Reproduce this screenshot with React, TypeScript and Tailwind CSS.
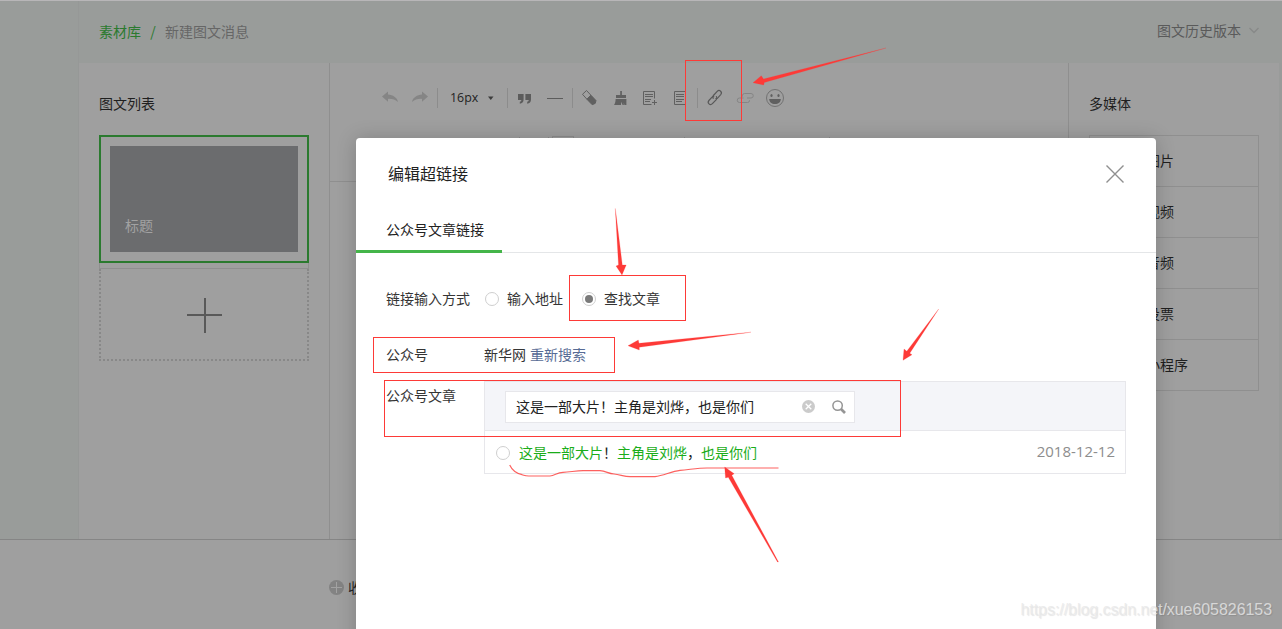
import type { ReactNode } from 'react';

const mediaItems = ['图片', '视频', '音频', '投票', '小程序'];

function Divider({ className }: { className: string }) {
  return <span className={`h-5 w-px shrink-0 bg-[#8c8c8c] ${className}`} />;
}

function Radio({ checked = false }: { checked?: boolean }) {
  return (
    <span className="flex size-[14px] shrink-0 items-center justify-center rounded-full border border-[#cfcfcf] bg-white">
      {checked && <span className="size-2 rounded-full bg-[#7a7a7a]" />}
    </span>
  );
}

function Header() {
  return (
    <header className="flex h-[62px] shrink-0 items-center justify-between bg-[#999c9a] px-5 pb-0.5 text-sm">
      <div className="flex items-center">
        <span className="text-[#2b7a2f]">素材库</span>
        <span className="w-6 text-center text-[#2b7a2f]">/</span>
        <span className="text-[#666]">新建图文消息</span>
      </div>
      <div className="-mt-0.5 flex items-center gap-2 pr-[3px] text-[#5a5a5a]">
        图文历史版本
        <svg width="10" height="7" viewBox="0 0 10 7" fill="none" stroke="#878988" strokeWidth="1.3">
          <path d="M0.5 1L5 5.5L9.5 1" />
        </svg>
      </div>
    </header>
  );
}

function ArticleList() {
  return (
    <aside className="w-[251px] shrink-0 border-r border-[#8f8f8f] px-5 pt-[29px]">
      <h3 className="text-sm leading-[22px] text-[#1f1f1f]">图文列表</h3>
      <div className="mt-[21px] h-32 w-[210px] border-2 border-[#2b7a2f] p-[9px]">
        <div className="flex h-[106px] items-end bg-[#6b6c6e] px-[15px] pb-4 text-sm leading-[22px] text-[#a2a2a2]">标题</div>
      </div>
      <div className="h-[6px] w-[210px] border border-t-0 border-[#8f8f8f]" />
      <div className="flex h-[92px] w-[210px] items-center justify-center border-2 border-t-0 border-dotted border-[#888] pt-[3px] pl-px">
        <svg width="35" height="35" viewBox="0 0 35 35" fill="#595959">
          <path d="M17 0h2v35h-2zM0 16h35v2H0z" />
        </svg>
      </div>
    </aside>
  );
}

function Toolbar() {
  return (
    <div className="flex h-5 items-center">
      <svg className="ml-[51px] shrink-0" width="18" height="20" viewBox="0 0 18 20" fill="#858585">
        <path d="M1 8.6L7 3.6V6.6C12 7 16 9.4 17 14C14 11.3 11 10.7 7 10.9V13.8Z" />
      </svg>
      <svg className="ml-3 shrink-0" width="18" height="20" viewBox="0 0 18 20" fill="#858585">
        <path d="M17 8.6L11 3.6V6.6C6 7 2 9.4 1 14C4 11.3 7 10.7 11 10.9V13.8Z" />
      </svg>
      <Divider className="ml-2" />
      <span className="ml-3 w-7 font-['Open_Sans',sans-serif] text-[12.4px] leading-5 text-[#222]">16px</span>
      <svg className="ml-[10px] shrink-0" width="6" height="4" viewBox="0 0 6 4" fill="#3c3c3c">
        <path d="M0 0.5H5.5L2.75 4Z" />
      </svg>
      <Divider className="ml-[13px]" />
      <svg className="ml-[9px] shrink-0" width="16" height="20" viewBox="0 0 16 20" fill="#5c5c5c">
        <path d="M1 6h5.6v5.6c0 2.400-1.500 3.900-3.800 4.200v-2c1-.3 1.500-.8 1.500-1.800H1zM8.400 6H14v5.600c0 2.400-1.500 3.900-3.800 4.200v-2c1-.3 1.500-.8 1.500-1.800H8.400z" />
      </svg>
      <svg className="ml-[13px] shrink-0" width="18" height="20" viewBox="0 0 18 20" fill="#5c5c5c">
        <path d="M1 10h16v1H1z" />
      </svg>
      <Divider className="ml-2" />
      <svg className="ml-2 shrink-0" width="18" height="20" viewBox="0 0 18 20" fill="none" stroke="#606060">
        <path d="M1.500 6.300L5.500 2.500L10 7.300L5.900 11.200Z" strokeLinejoin="round" />
        <path d="M5.900 11.200L10 7.300L15 12.600L14.200 15.400L11.200 16.700Z" fill="#606060" strokeLinejoin="round" />
      </svg>
      <svg className="ml-[14px] shrink-0" width="16" height="20" viewBox="0 0 16 20" fill="#606060">
        <path d="M7.200 3h1.700v4H13v3H3V7h4.200zM2.600 11h10.800v6h-2l-.6-2.500V17H9.600L8 13.800V17H1c1.200-1.700 1.600-3.600 1.600-6z" />
      </svg>
      <svg className="ml-[13px] shrink-0" width="16" height="20" viewBox="0 0 16 20" fill="none" stroke="#606060">
        <path d="M12.500 10.500V3.500H1.500V16.500H9.500M3 6.500h8M3 8.500h8M3 11.500h6M3 13.500h5M12.500 12v5M10 14.500h5" />
      </svg>
      <svg className="ml-[15px] shrink-0" width="13" height="20" viewBox="0 0 13 20" fill="none" stroke="#606060">
        <path d="M12 3.500H1.500V16.500H12M3 6.500h8M3 8.500h8M3 11.500h8M3 13.500h6" />
      </svg>
      <Divider className="ml-[11px]" />
      <svg className="ml-2 shrink-0" width="18" height="20" viewBox="0 0 18 20" fill="none" stroke="#585858" strokeWidth="1.200" strokeLinecap="round">
        <path d="M7.200 10.300c-.7-.9-.6-1.900.2-2.800l3.800-4.100c1-1 2.400-1.100 3.400-.2s1 2.300.1 3.400l-2.900 3.200c-.6.600-1.200.8-1.900.7" />
        <path d="M10.400 8.700c.8.900.7 1.900-.1 2.900l-3.900 4.100c-1 1-2.400 1.100-3.400.2s-1-2.300-.1-3.400l2.900-3.200c.6-.6 1.200-.8 1.900-.7" />
      </svg>
      <svg className="ml-3 shrink-0" width="19" height="20" viewBox="0 0 19 20" fill="none" stroke="#858585">
        <path d="M6.500 8.500V7.500a2 2 0 0 1 2-2H15a2.250 2.250 0 0 1 0 4.500h-4M13.500 12v.5a2 2 0 0 1-2 2H3.500a2.250 2.250 0 0 1 0-4.500h4" />
      </svg>
      <svg className="ml-[10px] shrink-0" width="20" height="20" viewBox="0 0 20 20" fill="#606060">
        <circle cx="10" cy="10" r="8.500" fill="none" stroke="#727272" />
        <ellipse cx="6.500" cy="7.500" rx="1.100" ry="1.500" />
        <ellipse cx="13.500" cy="7.500" rx="1.100" ry="1.500" />
        <path d="M4.200 11h11.600c0 3.100-2.400 5-5.800 5s-5.800-1.900-5.800-5z" />
      </svg>
    </div>
  );
}

function Editor() {
  return (
    <main className="min-w-0 flex-1">
      <div className="h-[119px] border-b border-[#8f8f8f] pt-[25px]">
        <Toolbar />
        <div className="mt-7 flex h-5 items-start">
          <span className="mt-px ml-[189px] h-5 w-px bg-[#8c8c8c]" />
          <span className="mt-px ml-[28px] h-5 w-px bg-[#8c8c8c]" />
          <span className="ml-[3px] h-5 w-[22px] border border-[#8c8c8c]" />
          <span className="mt-px ml-[110px] h-5 w-px bg-[#8c8c8c]" />
          <span className="mt-px ml-[144px] h-5 w-px bg-[#8c8c8c]" />
        </div>
      </div>
    </main>
  );
}

function MediaPanel() {
  return (
    <aside className="w-[211px] shrink-0 border-l border-[#8f8f8f] pt-[29px] pl-5">
      <h3 className="text-sm leading-[22px] text-[#1f1f1f]">多媒体</h3>
      <ul className="mt-[21px] w-[170px] border border-b-0 border-[#8f8f8f]">
        {mediaItems.map((item) => (
          <li key={item} className="flex h-[51px] items-center border-b border-[#8f8f8f] pb-0.5 pl-14 text-sm text-[#1f1f1f]">
            {item}
          </li>
        ))}
      </ul>
    </aside>
  );
}

function FormRow({ label, className, children }: { label: string; className: string; children: ReactNode }) {
  return (
    <div className={`flex ${className}`}>
      <span className="w-[98px] shrink-0 pb-0.5 leading-[22px]">{label}</span>
      {children}
    </div>
  );
}

function LinkDialog() {
  return (
    <div className="absolute top-[138px] left-[356px] h-[520px] w-[800px] rounded-[4px] bg-white text-sm text-[#353535] shadow-[0_1px_20px_rgba(0,0,0,0.2)]">
      <div className="flex h-[72px] items-center justify-between px-8">
        <h2 className="pb-0.5 text-base text-[#222]">编辑超链接</h2>
        <svg width="18" height="18" viewBox="0 0 18 18" stroke="#8f8f8f" strokeWidth="1.400">
          <path d="M0.500 0.500L17.500 17.500M17.500 0.500L0.500 17.500" />
        </svg>
      </div>
      <div className="flex h-[43px] border-b border-[#e4e6e8]">
        <div className="h-[43px] w-[146px] border-b-[3px] border-[#44b549] pt-2 pl-[30px] leading-[22px] text-[#222]">公众号文章链接</div>
      </div>
      <div className="px-[30px] pt-[35px]">
        <FormRow label="链接输入方式" className="h-[22px] items-center">
          <div className="ml-px flex items-center gap-2">
            <Radio />
            <span className="pb-0.5">输入地址</span>
          </div>
          <div className="ml-[19px] flex items-center gap-2">
            <Radio checked />
            <span className="pb-0.5">查找文章</span>
          </div>
        </FormRow>
        <FormRow label="公众号" className="mt-[34px] h-[22px] items-center">
          <span className="pb-0.5">新华网</span>
          <a className="ml-1 pb-0.5 text-[#576b95]">重新搜索</a>
        </FormRow>
        <div className="mt-[15px] flex items-start">
          <span className="w-[98px] shrink-0 pt-[3px] leading-[22px]">公众号文章</span>
          <div className="h-[93px] w-[642px] border border-[#e7e7eb]">
            <div className="h-[49px] border-b border-[#e7e7eb] bg-[#f4f5f9] pt-[9px] pl-5">
              <div className="flex h-8 w-[350px] items-center border border-[#e7e7eb] bg-white pb-px pl-[10px] text-[#222]">
                <span className="w-[286px] pb-px">这是一部大片！主角是刘烨，也是你们</span>
                <svg width="13" height="13" viewBox="0 0 13 13" fill="#cbcbcb">
                  <circle cx="6.500" cy="6.500" r="6.500" />
                  <path d="M3.700 3.700L9.300 9.300M9.300 3.700L3.700 9.300" stroke="#fff" strokeWidth="1.300" />
                </svg>
                <svg className="mt-px ml-[17px]" width="14" height="14" viewBox="0 0 14 14" fill="none" stroke="#959595">
                  <circle cx="5.600" cy="5.600" r="4.700" strokeWidth="1.500" />
                  <path d="M9 9L13 13" strokeWidth="2.600" />
                </svg>
              </div>
            </div>
            <div className="flex h-[42px] items-center pt-0.5 pr-[10px] pl-[11px]">
              <Radio />
              <span className="ml-[9px] pb-[3px] text-[#1aad19]">
                这是一部大片<span className="text-[#222]">！</span>主角是刘烨<span className="text-[#222]">，</span>也是你们
              </span>
              <span className="ml-auto pb-0.5 font-['Open_Sans',sans-serif] text-[15px] text-[#8d8d8d]">2018-12-12</span>
            </div>
          </div>
        </div>
      </div>
    </div>
  );
}

// Red boxes and arrows drawn over the page
function Annotations() {
  return (
    <svg className="pointer-events-none absolute inset-0" width="1282" height="629" viewBox="0 0 1282 629">
      <g fill="none" stroke="#fd3a37">
        <rect x="685.5" y="60.5" width="56" height="60" />
        <rect x="569.5" y="275.5" width="116" height="45" />
        <rect x="373.5" y="337.5" width="241" height="35" />
        <rect x="384.5" y="380.5" width="516" height="56" />
      </g>
      <path
        d="M509.700 465C512 470 517 473.500 522 474.700C525 476 528 476 532 476H550C555 475.500 557 472.500 563 472.300C570 472 576 470.800 583 470.700H600C606 471 608 473.500 614 474C620 474.500 624 476.700 630 476.700H655C664 475.500 671 471.500 680 470.300C690 469.500 698 468 707 468H778.500"
        fill="none"
        stroke="#fd3a37"
        strokeWidth="1.200"
        opacity="0.8"
      />
      <g fill="#fd3a37" stroke="#fd3a37" strokeWidth="0.200">
        <path d="M753 82.700L761.300 75.700L763.500 79L886 48L764.300 82.500L763.700 85Z" />
        <path d="M615.300 208.500L622.300 264.900L626.200 265L622 274.900L616 266L618.500 265Z" />
        <path d="M628 345.700L638.300 340L639 343.300L751 332.200L639.300 347.200L639.300 350Z" />
        <path d="M903 360.300L904 349L906.800 351.200L938.700 309L909.800 353.200L912 354.700Z" />
        <path d="M724.700 467L734.200 473.700L731.800 475.200L778.500 562L777.500 562L728.300 477.300L725.500 478Z" />
      </g>
    </svg>
  );
}

export default function App() {
  return (
    <div className="relative h-[629px] w-[1282px] overflow-hidden bg-[#9f9f9f] font-['Noto_Sans_CJK_SC',sans-serif]">
      <div className="flex h-full flex-col border-t border-[#b8b6b8]">
        <div className="flex h-[538px] shrink-0">
          <nav className="w-[79px] shrink-0 border-r border-[#969897] bg-[#999c9a]" />
          <div className="flex min-w-0 flex-1 flex-col">
            <Header />
            <div className="flex min-h-0 flex-1">
              <ArticleList />
              <Editor />
              <MediaPanel />
              <div className="w-[3px] shrink-0 bg-[#999b9a]" />
            </div>
          </div>
        </div>
        <footer className="flex flex-1 items-start border-t border-[#858585] pt-9 pl-[329px] text-sm leading-[22px] text-[#1f1f1f]">
          <svg className="mt-1 mr-1" width="15" height="15" viewBox="0 0 15 15">
            <circle cx="7.500" cy="7.500" r="7.500" fill="#838383" />
            <path d="M7.500 2v11M2 7.500h11" stroke="#a2a2a2" />
          </svg>
          收起正文
        </footer>
      </div>
      <LinkDialog />
      <Annotations />
      <div className="absolute top-[598px] right-[10px] font-['Liberation_Sans',sans-serif] text-base leading-6 tracking-[-0.06px] whitespace-nowrap text-[#e8e8e8]/80 [text-shadow:1px_1px_1px_rgba(0,0,0,0.1)]">
        https://blog.csdn.net/xue605826153
      </div>
    </div>
  );
}
